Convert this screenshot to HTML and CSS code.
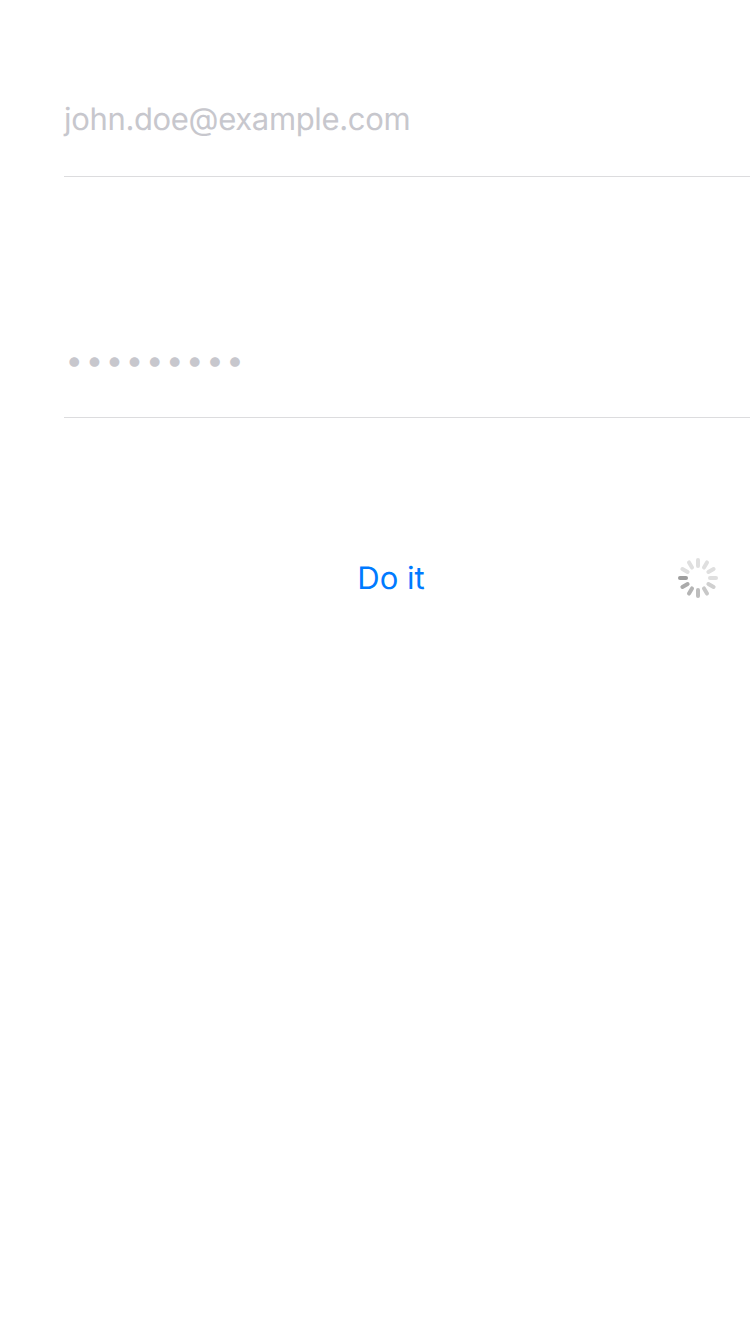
FILE: index.html
```html
<!DOCTYPE html>
<html lang="en">
<head>
<meta charset="utf-8">
<title>Login</title>
<link rel="stylesheet" href="styles.css">
</head>
<body>
<main class="form">
  <div class="field field-email"><span class="email">john.doe@example.com</span></div>
  <div class="field field-password"><span class="dots">•••••••••</span></div>
  <div class="actions">
    <span class="submit">Do it</span>
    <svg class="spinner" viewBox="-20 -20 40 40" stroke-width="4" stroke-linecap="round">
      <path d="M0-12V-18" stroke="#dfdfdf"/>
      <path d="M0-12V-18" stroke="#dfdfdf" transform="rotate(30)"/>
      <path d="M0-12V-18" stroke="#dfdfdf" transform="rotate(60)"/>
      <path d="M0-12V-18" stroke="#dfdfdf" transform="rotate(90)"/>
      <path d="M0-12V-18" stroke="#d0d0d0" transform="rotate(120)"/>
      <path d="M0-12V-18" stroke="#c8c8c8" transform="rotate(150)"/>
      <path d="M0-12V-18" stroke="#bdbdbd" transform="rotate(180)"/>
      <path d="M0-12V-18" stroke="#b4b4b4" transform="rotate(210)"/>
      <path d="M0-12V-18" stroke="#ababab" transform="rotate(240)"/>
      <path d="M0-12V-18" stroke="#9e9e9e" transform="rotate(270)"/>
      <path d="M0-12V-18" stroke="#dfdfdf" transform="rotate(300)"/>
      <path d="M0-12V-18" stroke="#dfdfdf" transform="rotate(330)"/>
    </svg>
  </div>
</main>
</body>
</html>
```
FILE: styles.css
```css
body {
  margin: 0;
  background: #fff;
  font: 31px/40px Inter, "Liberation Sans", sans-serif;
  text-rendering: geometricPrecision;
}
.form {
  display: flex;
  flex-direction: column;
  padding-left: 64px;
}
.field {
  box-sizing: border-box;
  border-bottom: 1px solid #dcdcde;
  color: #c7c7cd;
  white-space: nowrap;
}
.field-email {
  height: 177px;
  padding-top: 100px;
}
.field-password {
  height: 241px;
  padding: 164px 0 0 1.6px;
}
.email {
  letter-spacing: -0.34px;
}
.dots {
  letter-spacing: 2.65px;
}
.actions {
  display: grid;
  grid-template-columns: 1fr;
  align-items: start;
  margin-top: 140px;
  padding-right: 32px;
}
.submit,
.spinner {
  grid-area: 1 / 1;
}
.submit {
  padding-top: 1px;
  text-align: center;
  color: #007aff;
}
.spinner {
  justify-self: end;
  width: 40px;
  height: 40px;
  fill: none;
}
```
